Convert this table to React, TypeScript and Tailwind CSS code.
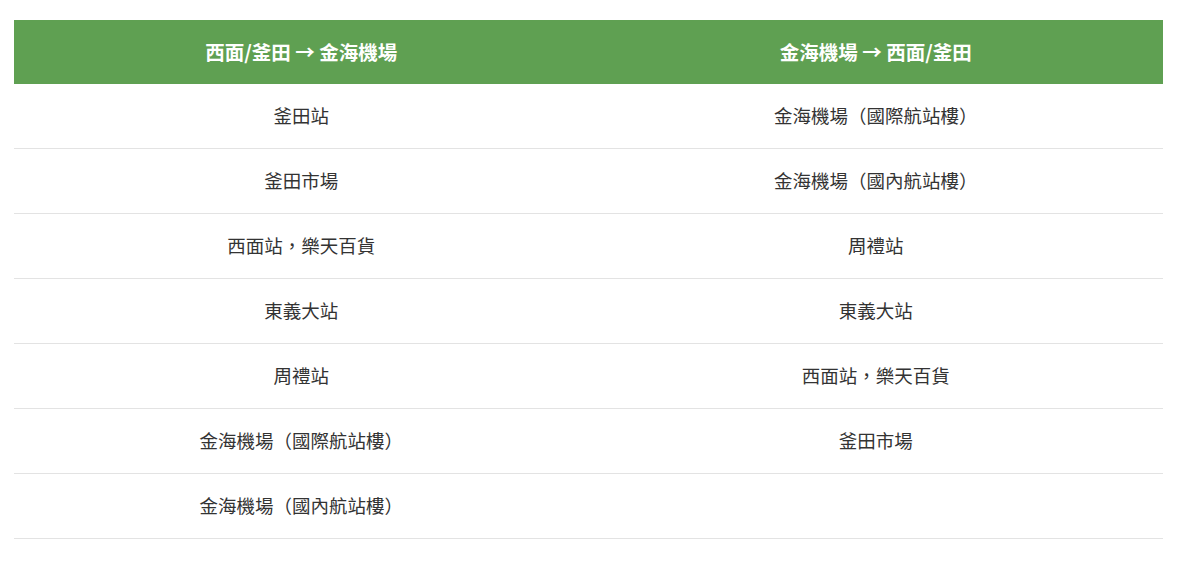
const rows: [string, string][] = [
  ["釜田站", "金海機場（國際航站樓）"],
  ["釜田市場", "金海機場（國內航站樓）"],
  ["西面站，樂天百貨", "周禮站"],
  ["東義大站", "東義大站"],
  ["周禮站", "西面站，樂天百貨"],
  ["金海機場（國際航站樓）", "釜田市場"],
  ["金海機場（國內航站樓）", ""],
];

export default function App() {
  return (
    <div
      className="w-[1182px] h-[570px] bg-white pt-5 px-[14px]"
      style={{ fontFamily: '"Noto Sans CJK TC", "Noto Sans", sans-serif' }}
    >
      <div className="w-[1149px]">
        <div className="grid grid-cols-2 h-16 bg-[#5fa052] text-white font-bold text-[19.5px]">
          <div className="flex items-center justify-center">西面/釜田 → 金海機場</div>
          <div className="flex items-center justify-center">金海機場 → 西面/釜田</div>
        </div>
        {rows.map((r, i) => (
          <div key={i} className="grid grid-cols-2 h-[65px] border-b border-[#e3e3e3] text-[18.5px] text-[#333]">
            <div className="flex items-center justify-center">{r[0]}</div>
            <div className="flex items-center justify-center">{r[1]}</div>
          </div>
        ))}
      </div>
    </div>
  );
}
